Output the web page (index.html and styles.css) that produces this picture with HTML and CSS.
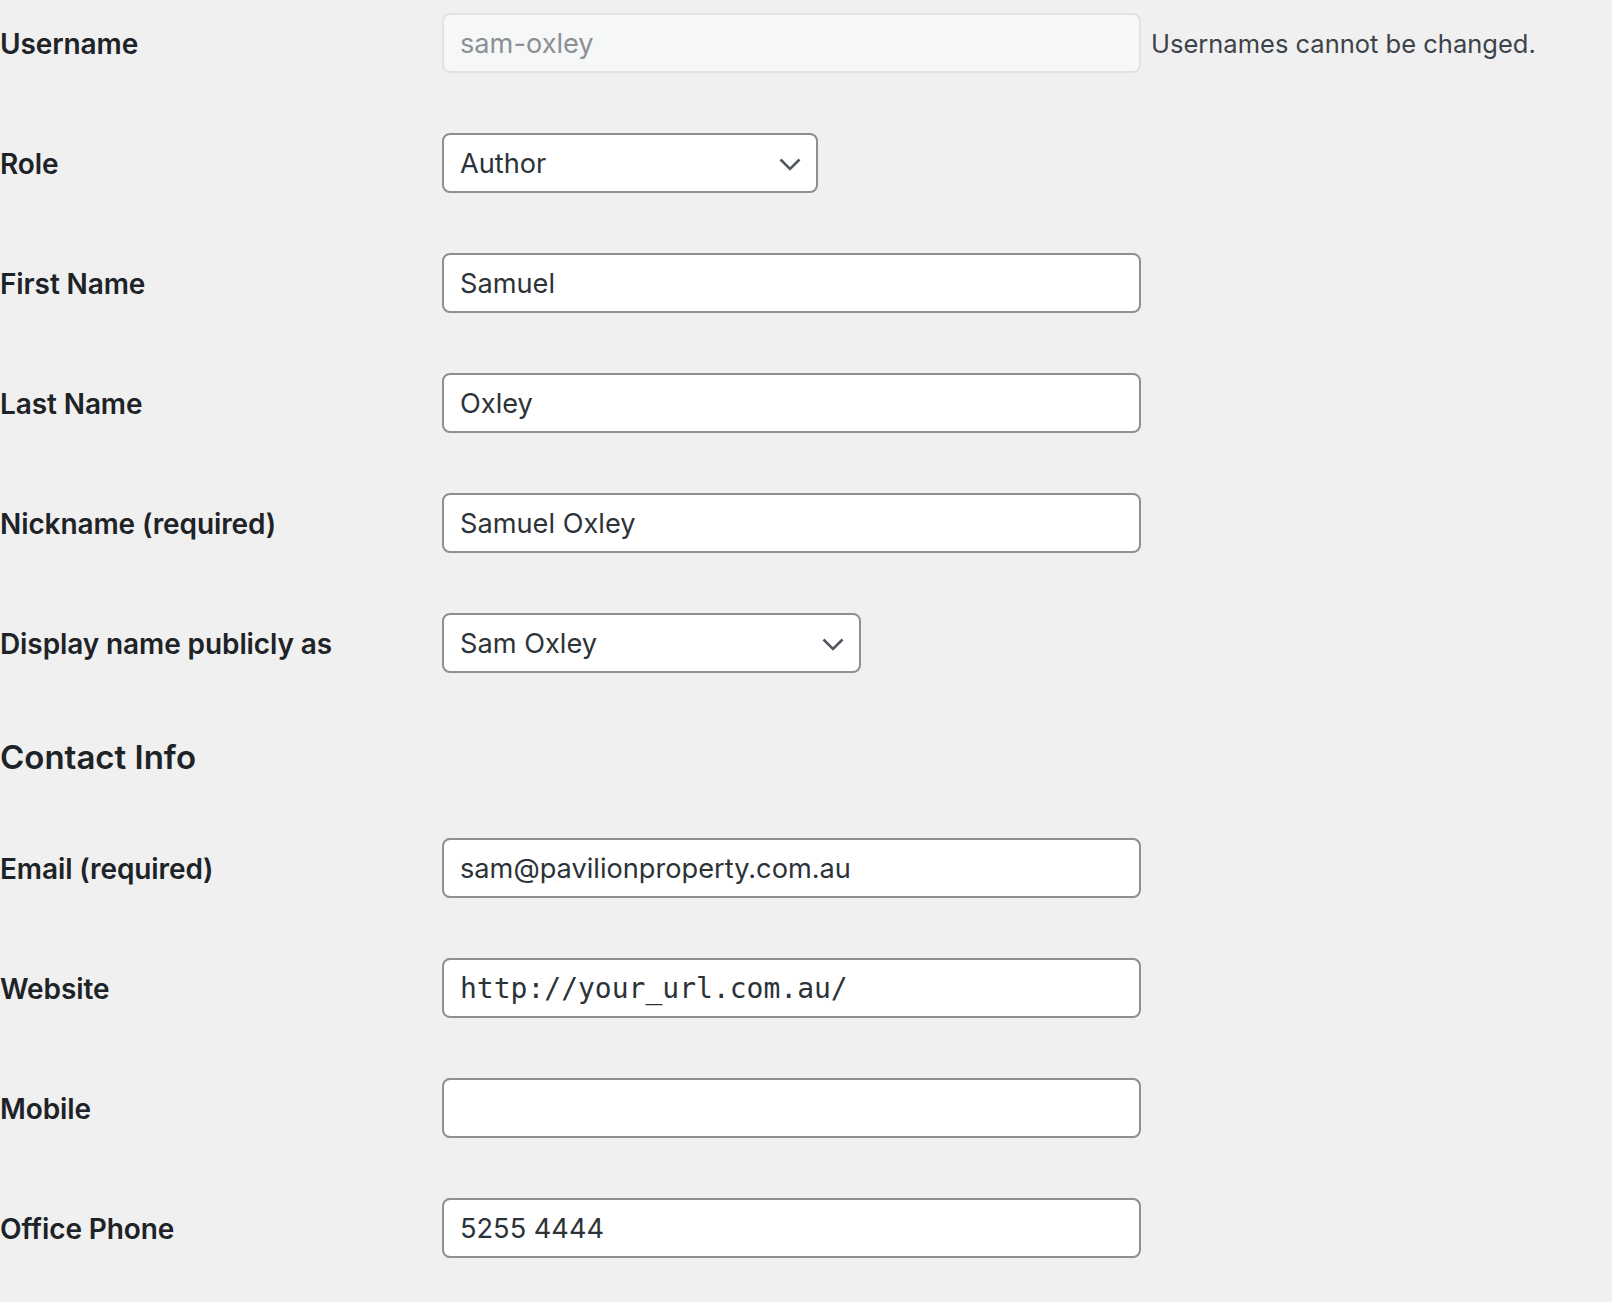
FILE: index.html
```html
<!DOCTYPE html>
<html lang="en">
<head>
<meta charset="utf-8">
<title>Profile</title>
<link rel="stylesheet" href="styles.css">
</head>
<body>
<div class="page">
  <div class="row">
    <div class="label">Username</div>
    <div class="field"><div class="input input-disabled">sam-oxley</div><span class="description">Usernames cannot be changed.</span></div>
  </div>
  <div class="row">
    <div class="label">Role</div>
    <div class="field"><div class="select select-role"><span>Author</span><svg class="chev" width="22" height="13" viewBox="0 0 22 13"><polyline points="1.5,1.5 11,11 20.5,1.5" fill="none" stroke="#50575e" stroke-width="2.6"/></svg></div></div>
  </div>
  <div class="row">
    <div class="label">First Name</div>
    <div class="field"><div class="input">Samuel</div></div>
  </div>
  <div class="row">
    <div class="label">Last Name</div>
    <div class="field"><div class="input">Oxley</div></div>
  </div>
  <div class="row">
    <div class="label">Nickname (required)</div>
    <div class="field"><div class="input">Samuel Oxley</div></div>
  </div>
  <div class="row">
    <div class="label">Display name publicly as</div>
    <div class="field"><div class="select select-display"><span>Sam Oxley</span><svg class="chev" width="22" height="13" viewBox="0 0 22 13"><polyline points="1.5,1.5 11,11 20.5,1.5" fill="none" stroke="#50575e" stroke-width="2.6"/></svg></div></div>
  </div>

  <h2 class="heading">Contact Info</h2>

  <div class="row">
    <div class="label">Email (required)</div>
    <div class="field"><div class="input">sam@pavilionproperty.com.au</div></div>
  </div>
  <div class="row">
    <div class="label">Website</div>
    <div class="field"><div class="input input-code">http://your_url.com.au/</div></div>
  </div>
  <div class="row">
    <div class="label">Mobile</div>
    <div class="field"><div class="input"></div></div>
  </div>
  <div class="row">
    <div class="label">Office Phone</div>
    <div class="field"><div class="input">5255 4444</div></div>
  </div>
</div>
</body>
</html>
```

FILE: styles.css
```css
html, body {
  margin: 0;
  padding: 0;
  background: #f0f0f1;
}

body {
  font-family: Inter, "Noto Sans", "Liberation Sans", sans-serif;
  color: #1d2327;
  width: 1612px;
  height: 1302px;
  overflow: hidden;
}

.page {
  padding-top: 13px;
}

.row {
  display: flex;
  align-items: center;
  height: 60px;
  margin-bottom: 60px;
}

.label {
  width: 442px;
  flex: none;
  font-size: 28px;
  font-weight: 600;
  color: #1d2327;
  letter-spacing: -0.1px;
  padding-top: 1px;
}

.field {
  display: flex;
  align-items: center;
}

.input, .select {
  box-sizing: border-box;
  height: 60px;
  border: 2px solid #8c8f94;
  border-radius: 8px;
  background: #ffffff;
  padding: 0 16px;
  font-size: 27.2px;
  color: #2c3338;
  display: flex;
  align-items: center;
}

.input {
  width: 699px;
}

.input-disabled {
  background: #f6f7f7;
  border-color: #e2e2e4;
  color: #8c8f94;
}

.input-code {
  font-family: "DejaVu Sans Mono", "Liberation Mono", monospace;
  font-size: 28px;
  color: #2c3338;
}

.description {
  margin-left: 10px;
  font-size: 25.5px;
  color: #3c434a;
}

.select {
  justify-content: space-between;
  padding-right: 15px;
}

.select-role {
  width: 376px;
}

.select-display {
  width: 419px;
}

.chev {
  display: block;
  flex: none;
  margin-top: 2px;
}

.heading {
  margin: 64px 0 61px 0;
  font-size: 33px;
  line-height: 40px;
  font-weight: 600;
  color: #1d2327;
}
```
